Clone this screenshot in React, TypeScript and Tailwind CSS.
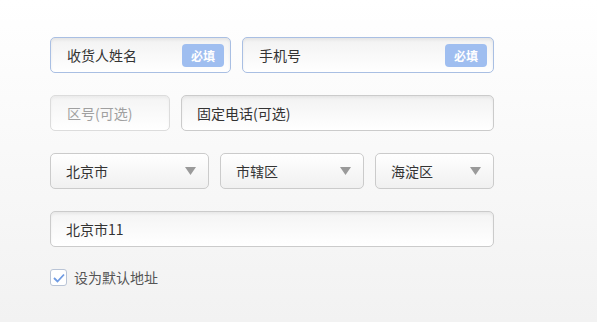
import React from "react";

const font = { fontFamily: '"Noto Sans CJK SC", "Noto Sans", sans-serif' };

function Badge() {
  return (
    <span className="absolute right-[6px] top-[6px] flex h-[23px] w-[42px] items-center justify-center rounded-[4px] bg-[#9fbef0] text-[12px] font-bold text-white">
      必填
    </span>
  );
}

function Select({ w, label }: { w: string; label: string }) {
  return (
    <div
      className={`${w} flex h-[36px] items-center justify-between rounded-[5px] border border-[#cbcbcb] bg-gradient-to-b from-white to-[#f0f0f0] pl-[15px] pr-[12px] text-[14px] text-[#333]`}
    >
      <span>{label}</span>
      <svg width="11" height="8" viewBox="0 0 11 8">
        <polygon points="0,0 11,0 5.5,8" fill="#9a9a9a" />
      </svg>
    </div>
  );
}

export default function App() {
  return (
    <div
      className="h-[322px] w-[597px] bg-gradient-to-b from-white to-[#f2f2f2] pl-[50px] pt-[37px]"
      style={font}
    >
      <div className="flex w-[444px] flex-col gap-[22px]">
        <div className="flex gap-[11px]">
          <div className="relative flex h-[36px] w-[181px] items-center rounded-[5px] border border-[#a9bfe3] bg-gradient-to-b from-[#f2f2f2] to-white pl-[16px] text-[14px] text-[#333] shadow-[inset_0_2px_3px_rgba(0,0,0,0.06)]">
            收货人姓名
            <Badge />
          </div>
          <div className="relative flex h-[36px] flex-1 items-center rounded-[5px] border border-[#a9bfe3] bg-gradient-to-b from-[#f2f2f2] to-white pl-[16px] text-[14px] text-[#333] shadow-[inset_0_2px_3px_rgba(0,0,0,0.06)]">
            手机号
            <Badge />
          </div>
        </div>
        <div className="flex gap-[11px]">
          <div className="flex h-[36px] w-[120px] items-center rounded-[5px] border border-[#dcdcdc] bg-gradient-to-b from-[#f4f4f4] to-white pl-[16px] text-[14px] text-[#a0a0a0] shadow-[inset_0_2px_3px_rgba(0,0,0,0.04)]">
            区号(可选)
          </div>
          <div className="flex h-[36px] flex-1 items-center rounded-[5px] border border-[#cbcbcb] bg-gradient-to-b from-[#f2f2f2] to-white pl-[15px] text-[14px] text-[#333] shadow-[inset_0_2px_3px_rgba(0,0,0,0.05)]">
            固定电话(可选)
          </div>
        </div>
        <div className="flex gap-[11px]">
          <Select w="w-[159px]" label="北京市" />
          <Select w="w-[144px]" label="市辖区" />
          <Select w="w-[119px]" label="海淀区" />
        </div>
        <div className="flex h-[36px] items-center rounded-[5px] border border-[#cbcbcb] bg-gradient-to-b from-[#f4f4f4] to-white pl-[15px] text-[14px] text-[#333] shadow-[inset_0_2px_3px_rgba(0,0,0,0.05)]">
          北京市11
        </div>
      </div>
      <div className="mt-[20px] flex items-center gap-[7px]">
        <div className="flex h-[17px] w-[17px] items-center justify-center rounded-[3px] border border-[#b9c4d6] bg-white">
          <svg width="12" height="10" viewBox="0 0 12 10">
            <polyline points="1,5 4.5,8.5 11,1.5" fill="none" stroke="#6f9be3" strokeWidth="1.8" />
          </svg>
        </div>
        <span className="text-[14px] text-[#555]">设为默认地址</span>
      </div>
    </div>
  );
}
